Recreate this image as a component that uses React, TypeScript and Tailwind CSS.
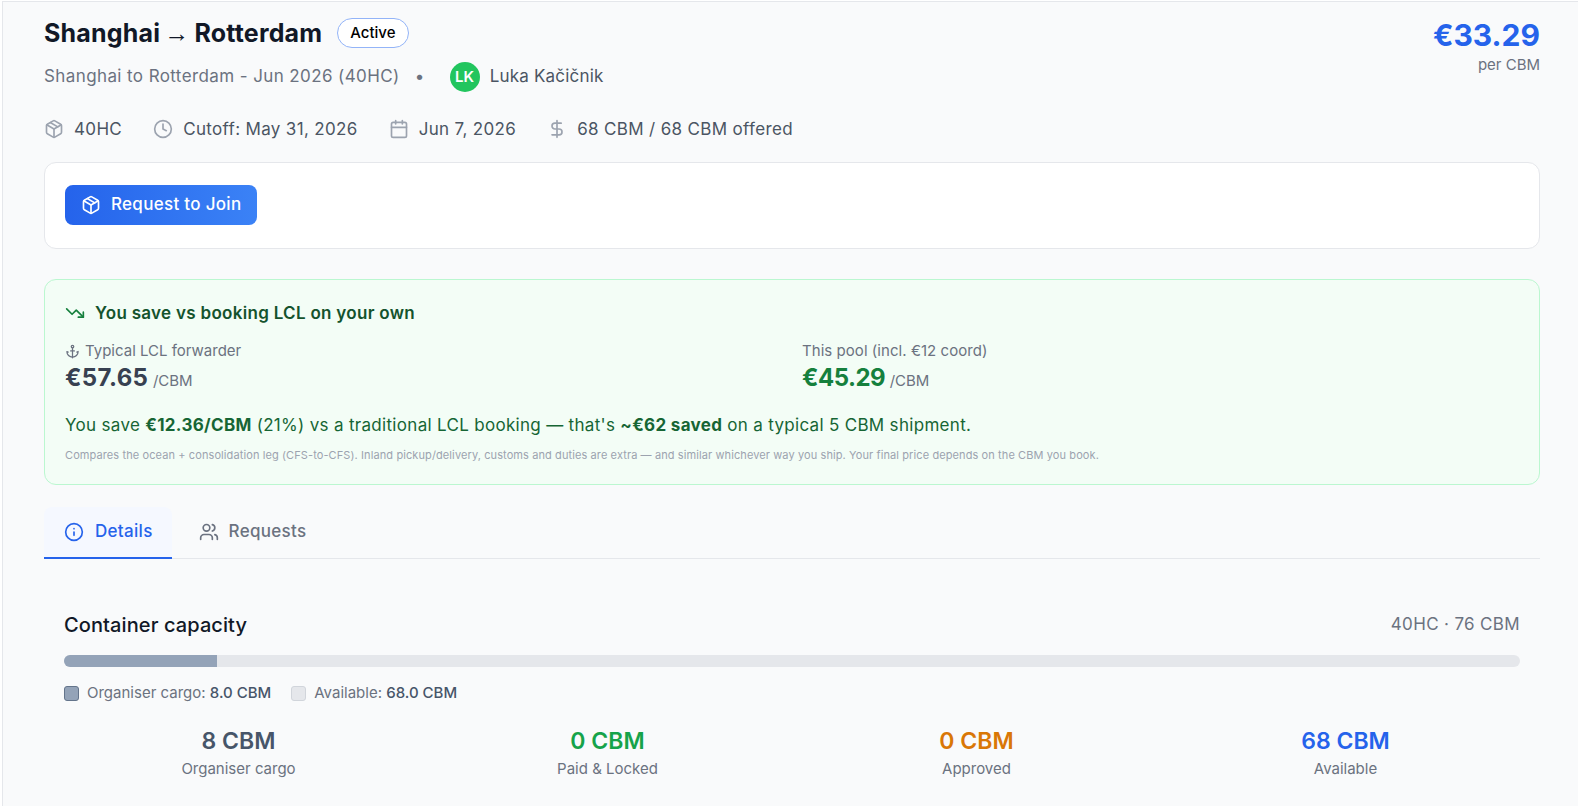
import { Anchor, Calendar, Clock, DollarSign, Info, Package, TrendingDown, Users } from 'lucide-react'

function Meta({ icon, text }: { icon: React.ReactNode; text: string }) {
  return (
    <div className="flex items-center gap-2.5">
      <span className="text-[#9ca3af]">{icon}</span>
      <span>{text}</span>
    </div>
  )
}

function Stat({ value, label, color }: { value: string; label: string; color: string }) {
  return (
    <div className="flex flex-col items-center">
      <div className={`text-[23px] leading-[30px] font-semibold ${color}`}>{value}</div>
      <div className="mt-[3px] text-[15px] leading-5 text-[#6b7280]">{label}</div>
    </div>
  )
}

export default function App() {
  return (
    <div className="h-[806px] overflow-hidden bg-white pl-[2px] pt-[1px] font-['Inter',sans-serif]">
      <div className="h-full border-l border-t border-[#e5e7eb] bg-[#f9fafb] pl-[41px] pr-[38px] pt-[15px]">
        {/* header */}
        <div className="flex items-start justify-between">
          <div>
            <div className="flex items-center gap-[15px]">
              <h1 className="text-[25px] font-bold leading-8 tracking-[0.18px] text-[#111827]">
                Shanghai <span className="-ml-[2px] -mr-[1px] font-['Liberation_Sans',sans-serif] font-normal">→</span> Rotterdam
              </h1>
              <span className="rounded-full border border-[#93b4f8] bg-white px-3 py-1 text-[15px] font-medium leading-[20px] text-black">Active</span>
            </div>
            <div className="mt-[13px] flex items-center text-[17px] tracking-[0.4px] text-[#6b7280]">
              <span>Shanghai to Rotterdam - Jun 2026 (40HC)</span>
              <span className="ml-[15px]">•</span>
              <div className="ml-[25px] flex items-center gap-2.5">
                <span className="flex size-[30px] items-center justify-center rounded-full bg-[#22c55e] text-[15px] font-semibold tracking-normal text-white">LK</span>
                <span className="tracking-[0.2px] text-[#4b5563]">Luka Kačičnik</span>
              </div>
            </div>
          </div>
          <div className="text-right">
            <div className="text-[30px] font-bold leading-9 text-[#2563eb]">€33.29</div>
            <div className="mt-0.5 text-[15px] leading-5 text-[#6b7280]">per CBM</div>
          </div>
        </div>

        <div className="mt-[25px] flex items-center gap-[31px] text-[17px] leading-6 tracking-[0.34px] text-[#4b5563]">
          <Meta icon={<Package size={20} />} text="40HC" />
          <Meta icon={<Clock size={20} />} text="Cutoff: May 31, 2026" />
          <Meta icon={<Calendar size={20} />} text="Jun 7, 2026" />
          <Meta icon={<DollarSign size={20} />} text="68 CBM / 68 CBM offered" />
        </div>

        {/* action card */}
        <div className="mt-[21px] rounded-xl border border-[#e5e7eb] bg-white pl-5 pt-[22px] pb-[23px]">
          <button className="flex h-10 items-center gap-2.5 rounded-lg bg-gradient-to-r from-[#2563eb] to-[#3b82f6] px-4 text-[17px] font-medium tracking-[0.3px] text-white">
            <Package size={20} />
            Request to Join
          </button>
        </div>

        {/* savings */}
        <div className="mt-[30px] rounded-xl border border-[#bbf7d0] bg-[#f3fdf6] px-5 pt-5 pb-[21px]">
          <div className="flex items-center gap-2.5 text-[17px] font-semibold leading-[26px] tracking-[0.3px] text-[#14532d]">
            <TrendingDown size={20} className="text-[#15803d]" />
            You save vs booking LCL on your own
          </div>
          <div className="mt-[15px] grid grid-cols-2 gap-5">
            <div>
              <div className="flex items-center gap-[5px] text-[15px] leading-5 text-[#6b7280]">
                <Anchor size={15} />
                Typical LCL forwarder
              </div>
              <div className="leading-[34px] text-[#374151]">
                <span className="text-[24px] font-bold tracking-[0.4px]">€57.65</span>{' '}
                <span className="text-[15px] text-[#6b7280]">/CBM</span>
              </div>
            </div>
            <div>
              <div className="text-[15px] leading-5 tracking-[0.05px] text-[#6b7280]">This pool (incl. €12 coord)</div>
              <div className="leading-[34px] text-[#15803d]">
                <span className="text-[24px] font-bold tracking-[-0.5px]">€45.29</span>{' '}
                <span className="text-[15px] text-[#6b7280]">/CBM</span>
              </div>
            </div>
          </div>
          <p className="mt-[14px] text-[17px] leading-[26px] tracking-[0.31px] text-[#166534]">
            You save <b className="font-bold">€12.36/CBM</b> (21%) vs a traditional LCL booking — that's <b className="font-bold">~€62 saved</b> on a typical 5 CBM shipment.
          </p>
          <p className="mt-[9px] text-[11px] leading-4 tracking-[0.1px] text-[#9ca3af]">
            Compares the ocean + consolidation leg (CFS-to-CFS). Inland pickup/delivery, customs and duties are extra — and similar whichever way you ship. Your final price depends on the CBM you book.
          </p>
        </div>

        {/* tabs */}
        <div className="mt-[22px] flex border-b border-[#e5e7eb] text-[17px] font-medium tracking-[0.3px]">
          <div className="-mb-px flex h-[52px] items-center gap-[11px] rounded-t-lg border-b-2 border-[#2563eb] bg-[#f5f8ff] pl-5 pr-[19px] text-[#2563eb]">
            <Info size={20} />
            Details
          </div>
          <div className="flex h-[50px] items-center gap-2.5 px-[27px] text-[#6b7280]">
            <Users size={20} />
            Requests
          </div>
        </div>

        {/* capacity */}
        <div className="px-5 pt-[52px]">
          <div className="flex items-center justify-between">
            <h2 className="text-[20px] font-medium leading-7 tracking-[0.1px] text-[#111827]">Container capacity</h2>
            <span className="text-[17px] tracking-[0.34px] text-[#6b7280]">40HC · 76 CBM</span>
          </div>
          <div className="mt-4 flex h-3 overflow-hidden rounded-full bg-[#e5e7eb]">
            <div className="h-full bg-[#94a3b8]" style={{ width: `${(8 / 76) * 100}%` }} />
          </div>
          <div className="mt-4 flex gap-5 text-[15px] leading-5 text-[#6b7280]">
            <div className="flex items-center gap-2">
              <span className="size-[15px] rounded-[3px] border border-[#64748b] bg-[#94a3b8]" />
              <span>Organiser cargo: <span className="font-medium text-[#475569]">8.0 CBM</span></span>
            </div>
            <div className="flex items-center gap-2">
              <span className="size-[15px] rounded-[3px] border border-[#d1d5db] bg-[#e5e7eb]" />
              <span>Available: <span className="font-medium text-[#475569]">68.0 CBM</span></span>
            </div>
          </div>
          <div className="mt-[23px] grid grid-cols-4 gap-5">
            <Stat value="8 CBM" label="Organiser cargo" color="text-[#475569]" />
            <Stat value="0 CBM" label="Paid & Locked" color="text-[#16a34a]" />
            <Stat value="0 CBM" label="Approved" color="text-[#d97706]" />
            <Stat value="68 CBM" label="Available" color="text-[#2563eb]" />
          </div>
        </div>
      </div>
    </div>
  )
}
